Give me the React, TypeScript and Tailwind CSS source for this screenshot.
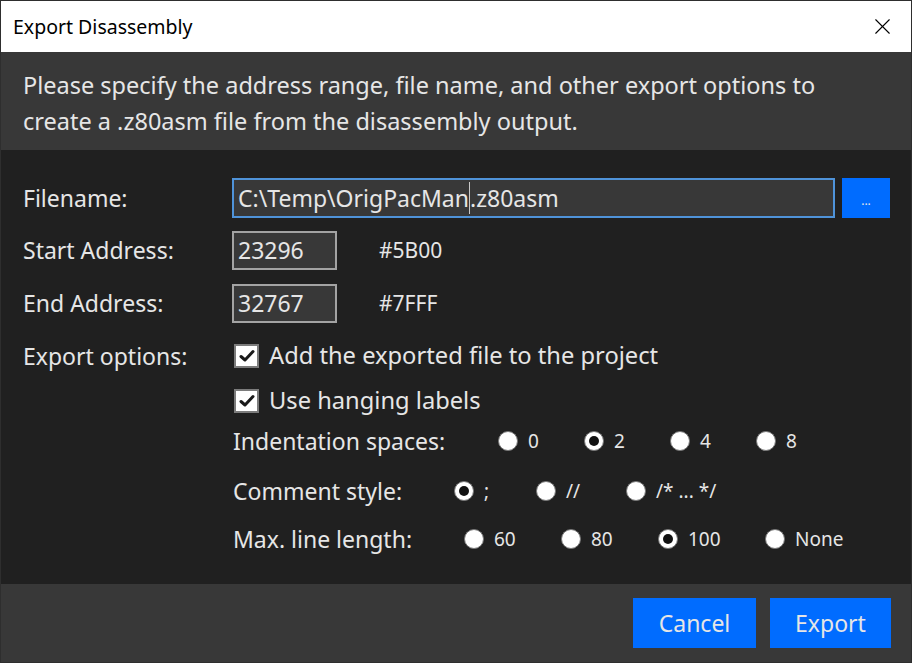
import { X } from 'lucide-react';

const FONT = { fontFamily: '"Noto Sans", "Open Sans", sans-serif' };

function Radio({ checked }: { checked?: boolean }) {
  return (
    <span className="w-[20px] h-[20px] shrink-0 rounded-full bg-white border border-[#777] flex items-center justify-center">
      {checked && <span className="w-[10px] h-[10px] rounded-full bg-[#111]" />}
    </span>
  );
}

function Checkbox() {
  return (
    <span className="w-[25px] h-[24px] shrink-0 bg-white border-2 border-[#7c7c7c] flex items-center justify-center">
      <svg width="16" height="14" viewBox="0 0 16 14">
        <path d="M2 7.5 L6 11 L14 2.5" fill="none" stroke="#1a1a1a" strokeWidth="3" strokeLinecap="round" strokeLinejoin="round" />
      </svg>
    </span>
  );
}

interface Opt {
  label: string;
  width: number;
  checked?: boolean;
}

function RadioRow({ title, labelWidth, options, top }: { title: string; labelWidth: number; options: Opt[]; top: string }) {
  return (
    <div className={`flex items-center h-[28px] ${top}`}>
      <div className="shrink-0 text-[23px]" style={{ width: labelWidth }}>{title}</div>
      {options.map((o) => (
        <div key={o.label} className="flex items-center shrink-0" style={{ width: o.width }}>
          <Radio checked={o.checked} />
          <span className="ml-[10px] text-[19px]">{o.label}</span>
        </div>
      ))}
    </div>
  );
}

export default function App() {
  return (
    <div className="w-[912px] h-[663px] border border-[#2e2e2e] flex flex-col text-[#e6e6e6] overflow-hidden" style={FONT}>
      {/* Title bar */}
      <div className="h-[51px] bg-white flex items-center justify-between pl-[12px] pr-[15px] shrink-0">
        <span className="text-[19.5px] text-black">Export Disassembly</span>
        <X className="w-[27px] h-[27px] text-black" strokeWidth={1} />
      </div>

      {/* Description */}
      <div className="h-[98px] bg-[#383838] pl-[22px] pt-[15px] shrink-0 text-[23.5px] leading-[36px]">
        Please specify the address range, file name, and other export options to
        <br />
        create a .z80asm file from the disassembly output.
      </div>

      {/* Content */}
      <div className="h-[434px] bg-[#202020] pl-[22px] shrink-0 flex flex-col">
        <div className="flex items-center h-[40px] mt-[28px]">
          <div className="w-[209px] text-[23px]">Filename:</div>
          <div className="w-[603px] h-[40px] bg-[#383838] border-2 border-[#4f93d9] flex items-center pl-[4px] text-[23px]">
            <span>C:\Temp\OrigPacMan</span>
            <span className="w-px h-[32px] bg-[#c8c8c8]" />
            <span>.z80asm</span>
          </div>
          <button className="ml-[7px] w-[48px] h-[40px] bg-[#006cff] text-[12px] text-[#e6e6e6] leading-none pt-[6px]">...</button>
        </div>

        <div className="flex items-center h-[39px] mt-[13px]">
          <div className="w-[209px] text-[23px]">Start Address:</div>
          <div className="w-[105px] h-[39px] bg-[#383838] border-2 border-[#a3a3a3] flex items-center pl-[4px] text-[23px]">23296</div>
          <div className="ml-[42px] text-[21px]">#5B00</div>
        </div>

        <div className="flex items-center h-[39px] mt-[14px]">
          <div className="w-[209px] text-[23px]">End Address:</div>
          <div className="w-[105px] h-[39px] bg-[#383838] border-2 border-[#a3a3a3] flex items-center pl-[4px] text-[23px]">32767</div>
          <div className="ml-[42px] text-[21px]">#7FFF</div>
        </div>

        <div className="flex items-center h-[24px] mt-[21px]">
          <div className="w-[211px] text-[23px]">Export options:</div>
          <Checkbox />
          <span className="ml-[10px] text-[23.7px]">Add the exported file to the project</span>
        </div>

        <div className="flex items-center h-[24px] mt-[21px] pl-[211px]">
          <Checkbox />
          <span className="ml-[10px] text-[23.7px]">Use hanging labels</span>
        </div>

        <div className="pl-[210px]">
          <RadioRow
            title="Indentation spaces:"
            labelWidth={265}
            top="mt-[14px]"
            options={[
              { label: '0', width: 86 },
              { label: '2', width: 86, checked: true },
              { label: '4', width: 86 },
              { label: '8', width: 86 },
            ]}
          />
          <RadioRow
            title="Comment style:"
            labelWidth={221}
            top="mt-[22px]"
            options={[
              { label: ';', width: 82, checked: true },
              { label: '//', width: 90 },
              { label: '/* ... */', width: 120 },
            ]}
          />
          <RadioRow
            title="Max. line length:"
            labelWidth={231}
            top="mt-[20px]"
            options={[
              { label: '60', width: 97 },
              { label: '80', width: 97 },
              { label: '100', width: 107, checked: true },
              { label: 'None', width: 80 },
            ]}
          />
        </div>
      </div>

      {/* Footer */}
      <div className="h-[78px] bg-[#383838] shrink-0 flex justify-end items-start pt-[14px] pr-[20px] gap-[14px]">
        <button className="w-[123px] h-[50px] bg-[#006cff] text-[23px] text-[#e6e6e6]">Cancel</button>
        <button className="w-[121px] h-[50px] bg-[#006cff] text-[23px] text-[#e6e6e6]">Export</button>
      </div>
    </div>
  );
}
